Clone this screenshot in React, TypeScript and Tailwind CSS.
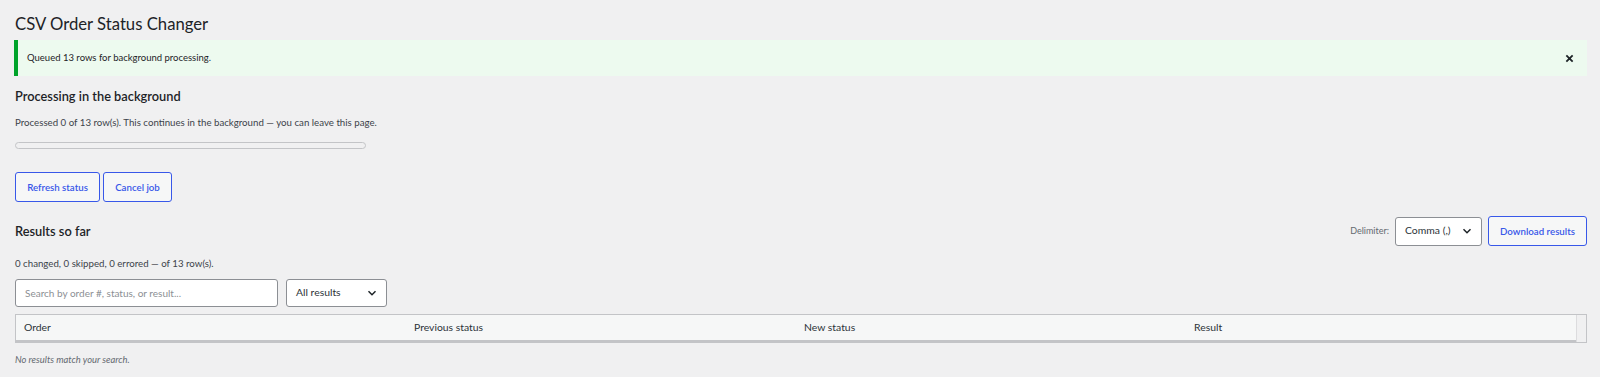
import React from "react";

function Chevron() {
  return (
    <svg width="10" height="10" viewBox="0 0 10 10" fill="none">
      <path d="M1.5 3.2 L5 6.7 L8.5 3.2" stroke="#1d2327" strokeWidth="1.5" />
    </svg>
  );
}

export default function App() {
  return (
    <div className="min-h-[377px] bg-[#f0f0f1] pl-[14px] pr-[13px] font-['Lato',sans-serif] text-[#3c434a]">
      <h1 className="ml-[1px] pt-[12px] pb-[4px] text-[16.7px] leading-[24px] font-normal text-[#1d2327]">
        CSV Order Status Changer
      </h1>
      <div className="flex h-[36px] items-center justify-between border-l-4 border-[#00a32a] bg-[#edfaef] pl-[9px] pr-[13px]">
        <span className="text-[9.5px] leading-[14px] text-[#1d2327]">Queued 13 rows for background processing.</span>
        <svg width="9" height="9" viewBox="0 0 10 10">
          <path d="M1.5 1.5 L8.5 8.5 M8.5 1.5 L1.5 8.5" stroke="#1d2327" strokeWidth="2" />
        </svg>
      </div>
      <h2 className="ml-[1px] mt-[10px] text-[12.8px] leading-[20px] font-semibold text-[#1d2327]">
        Processing in the background
      </h2>
      <p className="ml-[1px] mt-[9px] text-[9.7px] leading-[14px] text-[#3c434a]">
        Processed 0 of 13 row(s). This continues in the background — you can leave this page.
      </p>
      <div className="ml-[1px] mt-[13px] h-[7px] w-[351px] rounded-full border border-[#c3c4c7] bg-[#f0f0f1]" />
      <div className="ml-[1px] mt-[23px] flex gap-[3px]">
        <button className="h-[30px] w-[85px] rounded-[3px] border border-[#3858e9] bg-[#f6f7f7] text-[9.7px] font-semibold text-[#3858e9]">
          Refresh status
        </button>
        <button className="h-[30px] w-[69px] rounded-[3px] border border-[#3858e9] bg-[#f6f7f7] text-[9.7px] font-semibold text-[#3858e9]">
          Cancel job
        </button>
      </div>
      <div className="ml-[1px] mt-[14px] flex h-[30px] items-center justify-between">
        <h2 className="text-[12.8px] leading-[20px] font-semibold text-[#1d2327]">Results so far</h2>
        <div className="flex items-center gap-[6px]">
          <span className="text-[9px] leading-[14px] text-[#646970]">Delimiter:</span>
          <div className="flex h-[29px] w-[87px] items-center justify-between rounded-[3px] border border-[#8c8f94] bg-white pl-[9px] pr-[9px] text-[10.4px] text-[#2c3338]">
            <span>Comma (,)</span>
            <Chevron />
          </div>
          <button className="h-[30px] w-[99px] rounded-[3px] border border-[#3858e9] bg-[#f6f7f7] text-[9.7px] font-semibold text-[#3858e9]">
            Download results
          </button>
        </div>
      </div>
      <p className="ml-[1px] mt-[10px] text-[9.7px] leading-[14px] text-[#3c434a]">
        0 changed, 0 skipped, 0 errored — of 13 row(s).
      </p>
      <div className="ml-[1px] mt-[9px] flex gap-[8px]">
        <div className="flex h-[28px] w-[263px] items-center rounded-[3px] border border-[#8c8f94] bg-white px-[9px] text-[10px] text-[#8c8f94]">
          Search by order #, status, or result...
        </div>
        <div className="flex h-[28px] w-[101px] items-center justify-between rounded-[3px] border border-[#8c8f94] bg-white pl-[9px] pr-[9px] text-[10.4px] text-[#2c3338]">
          <span>All results</span>
          <Chevron />
        </div>
      </div>
      <div className="ml-[1px] mt-[7px] flex h-[29px] border border-[#c3c4c7]">
        <div className="grid flex-1 grid-cols-4 border-b-2 border-[#c3c4c7] bg-[#f6f7f7] text-[10.4px] text-[#2c3338]">
          <div className="flex items-center pl-[8px]">Order</div>
          <div className="flex items-center pl-[8px]">Previous status</div>
          <div className="flex items-center pl-[8px]">New status</div>
          <div className="flex items-center pl-[8px]">Result</div>
        </div>
        <div className="w-[10px] border-l border-[#dcdcde] bg-[#f0f0f1]" />
      </div>
      <p className="ml-[1px] mt-[10px] text-[9.4px] leading-[14px] italic text-[#646970]">No results match your search.</p>
    </div>
  );
}
